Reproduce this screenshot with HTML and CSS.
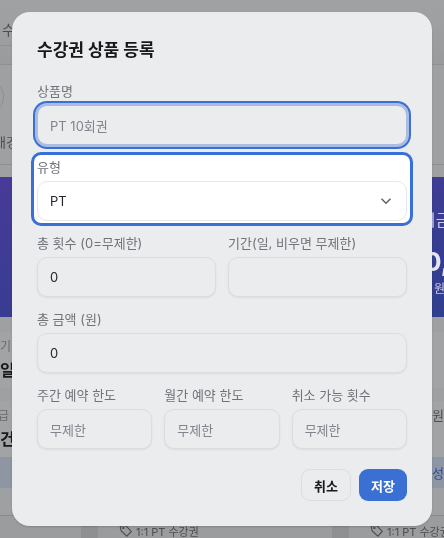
FILE: index.html
```html
<!DOCTYPE html>
<html lang="ko">
<head>
  <meta charset="UTF-8" />
  <meta name="viewport" content="width=device-width, initial-scale=1" />
  <title>수강권 상품 등록</title>
  <link rel="stylesheet" href="styles.css">
</head>
<body>

  <!-- Dimmed page behind the dialog -->
  <div class="page">
    <div class="top-bar">
      <div class="top-tab">수</div>
    </div>
    <div class="profile">
      <div class="avatar"></div>
      <div class="profile-text">배경</div>
    </div>
    <div class="banner">
      <div class="banner-label">미금</div>
      <div class="banner-amount">0,000</div>
      <div class="banner-unit">원</div>
    </div>
    <div class="stat">
      <div class="stat-left">
        <span class="stat-label">기간</span>
        <span class="stat-value">일</span>
      </div>
    </div>
    <div class="stat">
      <div class="stat-left">
        <span class="stat-label stat-label-cut">발급</span>
        <span class="stat-value">건</span>
      </div>
      <span class="stat-unit">원</span>
    </div>
    <div class="action-band"><span class="action-link">성/</span></div>
    <div class="spacer"></div>
    <div class="product-row">
      <div class="product-card"></div>
      <div class="product-card product-main">
        <svg class="tag-icon" viewBox="0 0 16 16"><path d="M1.500 3.500l1.500-2 5 .5 6 6.500-5 5.500-6.500-6z" /><circle cx="5" cy="4.500" r="0.700" /></svg>
        <span>1:1 PT 수강권</span>
      </div>
      <div class="product-card product-main">
        <svg class="tag-icon" viewBox="0 0 16 16"><path d="M1.500 3.500l1.500-2 5 .5 6 6.500-5 5.500-6.500-6z" /><circle cx="5" cy="4.500" r="0.700" /></svg>
        <span>1:1 PT 수강권</span>
      </div>
    </div>
  </div>

  <!-- Dialog -->
  <div class="overlay">
    <div class="modal">
      <h2 class="modal-title">수강권 상품 등록</h2>

      <div class="field">
        <label class="field-label">상품명</label>
        <div class="input input-focus placeholder">PT 10회권</div>
      </div>

      <div class="field field-active">
        <label class="field-label">유형</label>
        <div class="input input-select">
          <span>PT</span>
          <svg class="chevron" viewBox="0 0 16 16"><path d="M3.500 5.800L8 10.200l4.500-4.400" /></svg>
        </div>
      </div>

      <div class="row row-2">
        <div class="field">
          <label class="field-label">총 횟수 (0=무제한)</label>
          <div class="input">0</div>
        </div>
        <div class="field">
          <label class="field-label">기간(일, 비우면 무제한)</label>
          <div class="input"></div>
        </div>
      </div>

      <div class="field">
        <label class="field-label">총 금액 (원)</label>
        <div class="input">0</div>
      </div>

      <div class="row row-3">
        <div class="field">
          <label class="field-label">주간 예약 한도</label>
          <div class="input placeholder">무제한</div>
        </div>
        <div class="field">
          <label class="field-label">월간 예약 한도</label>
          <div class="input placeholder">무제한</div>
        </div>
        <div class="field">
          <label class="field-label">취소 가능 횟수</label>
          <div class="input placeholder">무제한</div>
        </div>
      </div>

      <div class="modal-actions">
        <button class="btn btn-cancel">취소</button>
        <button class="btn btn-save">저장</button>
      </div>
    </div>
  </div>

</body>
</html>
```

FILE: styles.css
```css
* { margin: 0; padding: 0; box-sizing: border-box; }

body {
  font-family: Inter, "Noto Sans CJK KR", sans-serif;
  width: 444px;
  height: 538px;
  overflow: hidden;
  background: #9d9ea0;
}

/* Page behind the dialog */
.page {
  height: 538px;
  display: flex;
  flex-direction: column;
  overflow: hidden;
  filter: blur(0.5px);
  color: #4d4e52;
  background: #9fa0a2;
}

.top-bar {
  height: 65px;
  flex-shrink: 0;
  background: linear-gradient(#a1a2a4, #9a9b9d);
  border-bottom: 1px solid #8f9092;
}

.top-tab {
  width: 30px;
  height: 46px;
  padding: 17px 0 0 2px;
  font-size: 14px;
  line-height: 26px;
  border-bottom: 1px solid #8f9092;
}

.profile {
  height: 100px;
  flex-shrink: 0;
  background: #9fa0a2;
  border-bottom: 1px solid #8e8f91;
  padding-top: 14px;
}

.avatar {
  width: 36px;
  height: 36px;
  margin-left: -32px;
  border: 1px solid #8e8f91;
  border-radius: 50%;
}

.profile-text {
  font-size: 13px;
  margin: 17px 0 0 -6px;
}

.banner {
  height: 140px;
  flex-shrink: 0;
  margin-top: 12px;
  background: linear-gradient(170deg, #483a98, #2f3f8e);
  color: #c9c9e6;
  display: flex;
  flex-direction: column;
  align-items: flex-start;
  padding: 32px 0 0 421px;
  white-space: nowrap;
}

.banner-label { font-size: 16px; line-height: 22px; }

.banner-amount {
  font-size: 26px;
  font-weight: 700;
  line-height: 32px;
  margin: 15px 0 0 3px;
  color: #e4e4f2;
}

.banner-unit { font-size: 12px; line-height: 16px; margin: 3px 0 0 13px; }

.stat {
  height: 56px;
  flex-shrink: 0;
  margin-top: 13px;
  background: #a2a3a5;
  display: flex;
  justify-content: space-between;
  align-items: center;
}

.banner + .stat { margin-top: 15px; }

.stat-left { display: flex; flex-direction: column; }
.stat-label { font-size: 12px; line-height: 18px; color: #6a6b6f; }
.stat-label-cut { margin-left: -13px; }
.stat-value { font-size: 16px; font-weight: 700; line-height: 24px; margin-top: 2px; color: #18191b; }
.stat-unit { width: 12px; margin-bottom: 29px; font-size: 13px; line-height: 18px; }

.action-band {
  height: 31px;
  flex-shrink: 0;
  background: #8e95a3;
  display: flex;
  justify-content: flex-end;
  align-items: center;
}

.action-link { width: 12px; font-size: 13px; color: #2d4f9c; white-space: nowrap; }

.spacer {
  height: 28px;
  flex-shrink: 0;
  border-bottom: 1px solid #88898b;
}

.product-row {
  flex: 1;
  display: grid;
  grid-template-columns: 81px 234px 1fr;
  column-gap: 17px;
  background: #8f9092;
}

.product-card { background: #9b9c9e; }

.product-main {
  display: flex;
  align-items: center;
  gap: 3px;
  padding: 7px 0 0 21px;
  font-size: 11px;
  white-space: nowrap;
  overflow: hidden;
}

.tag-icon {
  width: 14px;
  height: 14px;
  fill: none;
  stroke: #4d4e52;
  stroke-width: 1.300;
  flex-shrink: 0;
}

/* Dialog */
.overlay {
  position: fixed;
  top: 0;
  left: 0;
  width: 444px;
  height: 538px;
  padding: 12px 12px 0;
}

.modal {
  width: 420px;
  height: 514px;
  padding: 25px 25px 0;
  background: #ebecee;
  border-radius: 18px;
  box-shadow: 0 1px 2px rgba(0, 0, 0, 0.15);
}

.modal-title {
  font-size: 17px;
  font-weight: 700;
  line-height: 26px;
  color: #16181c;
  margin-bottom: 19px;
}

.field-label {
  display: block;
  font-size: 13px;
  line-height: 18px;
  color: #6f737a;
  margin-bottom: 5px;
  white-space: nowrap;
}

.input {
  height: 40px;
  padding: 0 12px;
  display: flex;
  align-items: center;
  font-size: 13px;
  color: #24262b;
  background: #ebecee;
  border: 1px solid #dcdde0;
  border-radius: 10px;
  box-shadow: 0 1px 2px rgba(0, 0, 0, 0.08);
}

.placeholder { color: #80848c; }

.input-focus {
  border-color: #a9bce3;
  box-shadow: 0 0 0 2px #a9bce3, 0 0 0 4px #3a6fd8;
}

.field-active {
  height: 74px;
  margin: 7px -6px 0;
  padding: 3px 3px 2px;
  background: #fff;
  border: 3px solid #3a6fd8;
  border-radius: 10px;
}

.input-select {
  justify-content: space-between;
  background: #fff;
  border-color: #e6e7ea;
  box-shadow: none;
}

.chevron {
  width: 16px;
  height: 16px;
  fill: none;
  stroke: #5e626a;
  stroke-width: 1.500;
}

.row { display: grid; column-gap: 12px; }
.row-2 { grid-template-columns: 1fr 1fr; }
.row-3 { grid-template-columns: 1fr 1fr 1fr; }

.field-active + .row { margin-top: 8px; }
.row + .field, .field + .row-3 { margin-top: 13px; }

.modal-actions {
  display: flex;
  justify-content: flex-end;
  gap: 8px;
  margin-top: 20px;
}

.btn {
  height: 32px;
  font-family: inherit;
  font-size: 13px;
  font-weight: 600;
  border-radius: 9px;
  cursor: pointer;
}

.btn-cancel {
  width: 50px;
  color: #16181c;
  background: #ebecee;
  border: 1px solid #dcdde0;
}

.btn-save {
  width: 48px;
  color: #fff;
  background: #3a6fd4;
  border: none;
}
```
